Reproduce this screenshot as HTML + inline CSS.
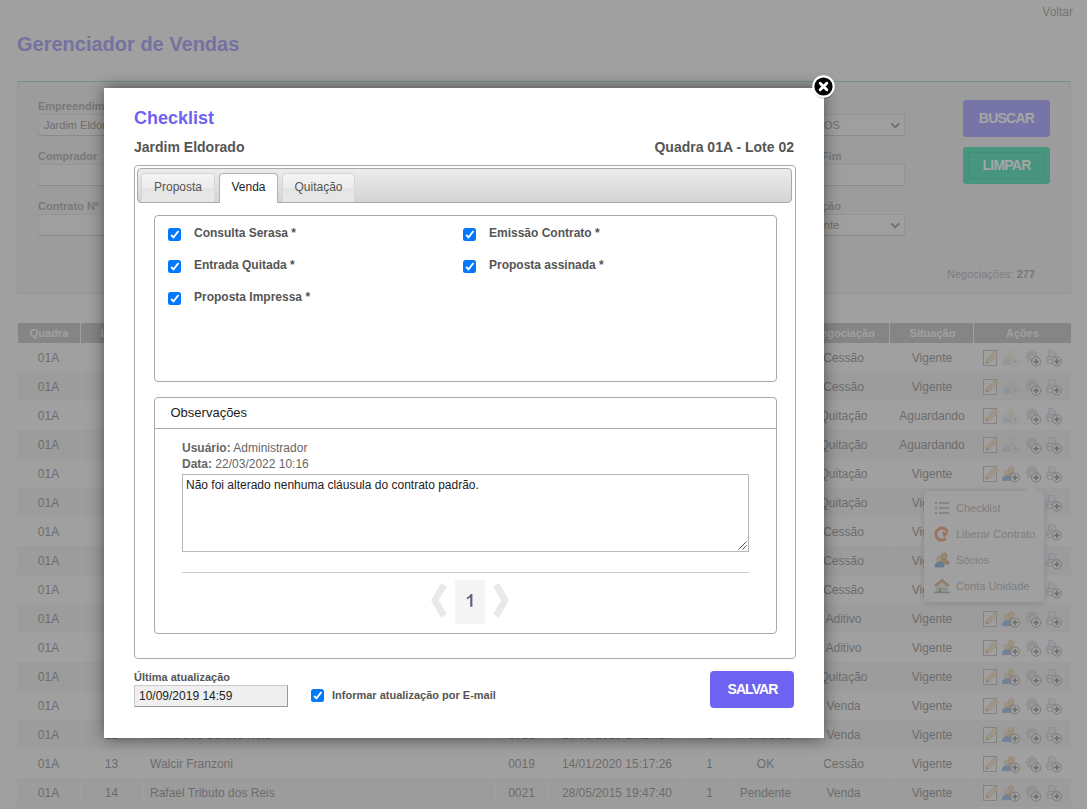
<!DOCTYPE html>
<html lang="pt-br">
<head>
<meta charset="utf-8">
<title>Gerenciador de Vendas</title>
<style>
*{box-sizing:border-box;margin:0;padding:0}
html,body{width:1087px;height:809px;overflow:hidden;background:#fff}
body{font-family:"Liberation Sans",sans-serif;font-size:12px;color:#555;position:relative}
/* ---------- background page ---------- */
#page{position:absolute;left:0;top:0;width:1087px;height:809px;overflow:hidden;background:#fff}
#voltar{position:absolute;right:14px;top:5px;font-size:12px;color:#6a6a6a}
#ptitle{position:absolute;left:17px;top:32px;font-size:20px;font-weight:bold;color:transparent;line-height:24px;white-space:nowrap}
#filter{position:absolute;left:17px;top:81px;width:1054px;height:213px;background:#f1f1f1;border:1px solid #dcdcdc;border-top:1px solid #4fd3b6}
.flabel{position:absolute;font-size:11px;font-weight:bold;color:#7c7c7c;line-height:14px;white-space:nowrap}
.finput{position:absolute;height:22px;background:#fbfbfb;border:1px solid #dadada;border-bottom-color:#b4b4b4;border-right-color:#d0d0d0;font-size:11px;color:#555;line-height:20px;padding-left:5px;white-space:nowrap;overflow:hidden}
.chev{position:absolute;right:4px;top:7px;width:10.5px;height:7px}
.btn{position:absolute;color:#fff;font-weight:bold;font-size:14px;text-align:center;border-radius:4px;letter-spacing:-.75px}
.neg{position:absolute;left:929px;top:185px;font-size:11px;color:#8a8a8a;line-height:14px;white-space:nowrap}
.neg b{color:#777}
#tbl{position:absolute;left:17px;top:323px;width:1054px;height:520px}
.th{position:absolute;top:0;height:20px;background:#a3a3a3;color:#fff;font-weight:bold;font-size:11px;line-height:20px;text-align:center;border-left:1px solid #fff}
.th:first-child{border-left:0;left:1px !important;width:62px !important}
.tr{position:absolute;left:0;width:1054px;height:29px;line-height:31px;font-size:12px;color:#505050}
.tr.alt{background:#f2f2f2}
.vs{position:absolute;top:0;width:1px;height:29px;background:#fff}
.tr span{position:absolute;top:0;text-align:center;white-space:nowrap}
.ic{position:absolute;top:7px;opacity:.82}
#dd{position:absolute;left:924px;top:491px;width:120px;height:111px;background:#fff;border-radius:4px;box-shadow:0 1px 6px rgba(0,0,0,.35)}
.ddi{position:absolute;left:0;width:120px;height:26px;line-height:26px;font-size:11px;color:#8c8c8c;padding-left:32px;white-space:nowrap}
.ddic{position:absolute;left:10px;top:5px;width:16px;height:16px}
#ddcaret{position:absolute;left:101px;top:-6px;width:0;height:0;border-left:6px solid transparent;border-right:6px solid transparent;border-bottom:6px solid #fff}
#ptitle2{position:absolute;left:17px;top:32px;font-size:20px;font-weight:bold;color:#76729f;line-height:24px;white-space:nowrap}
.btn2{position:absolute;width:87px;height:37px;line-height:37px;color:#a6a6a6;font-weight:bold;font-size:14px;text-align:center;border-radius:4px;letter-spacing:-.75px}
/* ---------- overlay ---------- */
#overlay{position:absolute;left:0;top:0;width:1087px;height:809px;background:#777;opacity:.7}
/* ---------- modal ---------- */
#modal{position:absolute;left:104px;top:88px;width:720px;height:650px;background:#fff;box-shadow:0 0 16px 0 rgba(0,0,0,.44),0 -5px 10px -6px rgba(0,0,0,.2),0 5px 10px -6px rgba(0,0,0,.2)}
#close{position:absolute;left:812px;top:74.5px;width:23px;height:23px;overflow:visible}
#modal .m{position:absolute;white-space:nowrap}
#mtitle{left:30px;top:19px;font-size:18px;font-weight:bold;color:#6d63f0;line-height:22px}
#memp{left:30px;top:51px;font-size:14px;font-weight:bold;color:#555;line-height:16px}
#mlote{right:30px;top:51px;font-size:14px;font-weight:bold;color:#555;line-height:16px}
#tabs{position:absolute;left:30px;top:77px;width:662px;height:494px;border:1px solid #aaa;border-radius:4px;background:#fff}
#tabhead{position:absolute;left:2px;top:2px;width:655px;height:35px;border:1px solid #aaa;border-radius:4px;background:linear-gradient(#ececec,#d4d4d4)}
.tab{position:absolute;top:4px;height:29px;border:1px solid #d6d6d6;border-bottom:0;border-radius:4px 4px 0 0;background:linear-gradient(#f4f4f4 0%,#ededed 50%,#e4e4e4 51%,#e8e8e8 100%);color:#555;font-size:12px;line-height:27px;text-align:center}
.tab.act{background:#fff;border-color:#b2b2b2;color:#212121;height:30px}
.fs{position:absolute;border:1px solid #aaa;border-radius:4px;background:#fff}
.cb{position:absolute;width:13.4px;height:13px;border-radius:2.5px;background:#0478fb}
.cb svg{position:absolute;left:0;top:0;width:13px;height:13px}
.cl{position:absolute;font-size:12px;font-weight:bold;color:#555;line-height:14px;white-space:nowrap}
#obs-h{position:absolute;left:0;top:0;width:100%;height:31px;border-bottom:1px solid #aaa;font-size:13px;color:#222;line-height:29px;padding-left:15.5px}
.ol{position:absolute;left:27px;font-size:12px;color:#666;line-height:14px;white-space:nowrap}
#ta{position:absolute;left:27px;top:76px;width:567px;height:78px;border:1px solid #b8b8b8;font-size:12px;color:#222;line-height:14px;padding:3px 3px;white-space:nowrap}
#hr{position:absolute;left:27px;top:174px;width:567px;height:1px;background:#ccc}
#pg1{position:absolute;left:300px;top:182px;width:30px;height:44px;background:#f5f5f5;color:transparent;font-size:18px;line-height:44px;text-align:center}
.pgc{position:absolute;top:185px;width:19px;height:36px}
#ult-l{left:30px;top:582px;font-size:11px;font-weight:bold;color:#555;line-height:14px}
#ult-i{left:30px;top:597px;width:154px;height:22px;background:#efefef;border:1px solid #c8c8c8;border-bottom-color:#999;border-right-color:#999;font-size:12px;color:#222;line-height:20px;padding-left:4px}
#inf-l{left:228px;top:600px;font-size:11px;font-weight:bold;color:#555;line-height:14px}
#salvar{left:606px;top:583px;width:84px;height:37px;border-radius:4px;background:#6d63f0;color:#fff;font-size:14px;font-weight:bold;line-height:37px;text-align:center;letter-spacing:-.9px;padding-left:1px}
</style>
</head>
<body>
<div id="page">
  <div id="voltar">Voltar</div>
  <div id="ptitle">Gerenciador de Vendas</div>
  <div id="filter">
<div class="flabel" style="left:20px;top:17px">Empreendimento</div>
<div class="finput sel" style="left:20px;top:32px;width:250px">Jardim Eldorado</div>
<div class="flabel" style="left:20px;top:67px">Comprador</div>
<div class="finput" style="left:20px;top:82px;width:250px"></div>
<div class="flabel" style="left:20px;top:117px">Contrato N&ordm;</div>
<div class="finput" style="left:20px;top:132px;width:250px"></div>
<div class="flabel" style="left:777px;top:17px">Lote</div>
<div class="finput sel" style="left:773px;top:32px;width:114px;padding-left:9px">TODOS<svg class="chev" viewBox="0 0 12 8"><path d="M1.5 1.5 L6 6 L10.5 1.5" fill="none" stroke="#555" stroke-width="2"/></svg></div>
<div class="flabel" style="left:777px;top:67px">Data Fim</div>
<div class="finput" style="left:773px;top:82px;width:114px"></div>
<div class="flabel" style="left:777px;top:117px">Situa&ccedil;&atilde;o</div>
<div class="finput sel" style="left:773px;top:132px;width:114px;padding-left:10px">Vigente<svg class="chev" viewBox="0 0 12 8"><path d="M1.5 1.5 L6 6 L10.5 1.5" fill="none" stroke="#555" stroke-width="2"/></svg></div>
<div class="btn" style="left:945px;top:18px;width:87px;height:37px;line-height:37px;background:#6c5ce7">BUSCAR</div>
<div class="btn" style="left:945px;top:65px;width:87px;height:37px;line-height:37px;background:#00b894;outline:1px dotted rgba(0,0,0,.28);outline-offset:-5px">LIMPAR</div>
<div class="neg">Negocia&ccedil;&otilde;es: <b>277</b></div>
</div>
  <div id="tbl">
<div class="th" style="left:0px;width:63px">Quadra</div>
<div class="th" style="left:63px;width:63px">Lote</div>
<div class="th" style="left:126px;width:352px">Comprador</div>
<div class="th" style="left:478px;width:53px">Contrato</div>
<div class="th" style="left:531px;width:138px">Data</div>
<div class="th" style="left:669px;width:47px">Nº</div>
<div class="th" style="left:716px;width:65px">Status</div>
<div class="th" style="left:781px;width:91px">Negociação</div>
<div class="th" style="left:872px;width:86px">Situação</div>
<div class="th" style="left:956px;width:98px">Ações</div>
<div class="tr" style="top:20px"><span style="left:0px;width:63px">01A</span><span style="left:63px;width:63px">01</span><span style="left:133px;width:345px;text-align:left">Ana Paula Martins</span><span style="left:478px;width:53px">0003</span><span style="left:531px;width:138px">12/03/2015 10:12:05</span><span style="left:669px;width:47px">1</span><span style="left:716px;width:65px">OK</span><span style="left:781px;width:91px">Cessão</span><span style="left:872px;width:86px">Vigente</span><svg class="ic" style="left:966px" width="16" height="17" viewBox="0 0 16 17"><rect x="0.5" y="0.5" width="13" height="15" fill="#fdfdfd" stroke="#8c8c8c"/><path d="M3.45 9.45 L11.95 0.95 L15.05 4.05 L6.55 12.55 L3.1 13 Z" fill="#f3d29b" stroke="#d8ab68" stroke-width=".7"/><path d="M3.1 13 L3.5 11 L5.1 12.6 Z" fill="#3a3a3a"/></svg><svg class="ic" style="left:985px;opacity:.25" width="18" height="17" viewBox="0 0 18 17"><circle cx="9.2" cy="3.4" r="3" fill="#edc48a" stroke="#c99a58" stroke-width=".6"/><path d="M3.5 12.5 Q3.5 6.8 9.2 6.8 Q14.5 6.8 14.5 12.5 Z" fill="#dfa85a" stroke="#b98644" stroke-width=".6"/><circle cx="4.7" cy="6.6" r="2.6" fill="#f4d3a0" stroke="#b89868" stroke-width=".5"/><path d="M0.3 14.6 Q0.3 9.8 4.7 9.8 Q9.2 9.8 9.2 14.6 Z" fill="#3d8ae6" stroke="#2d6cc0" stroke-width=".6"/><circle cx="13" cy="11.6" r="4.5" fill="#fff" stroke="#666" stroke-width="1"/><path d="M13 9v5.2M10.4 11.6h5.2" stroke="#333" stroke-width="1.5"/></svg><svg class="ic" style="left:1008px" width="18" height="17" viewBox="0 0 18 17"><g fill="#c9c9c9" stroke="#b0b0b0" stroke-width=".6"><path d="M6.4 0.5 l1.2 0 .5 1.6 1.3 .5 1.5-.8 .9 .9 -.8 1.5 .5 1.3 1.6 .5 0 1.2 -1.6 .5 -.5 1.3 .8 1.5 -.9 .9 -1.5-.8 -1.3 .5 -.5 1.6 -1.2 0 -.5-1.6 -1.3-.5 -1.5 .8 -.9-.9 .8-1.5 -.5-1.3 -1.6-.5 0-1.2 1.6-.5 .5-1.3 -.8-1.5 .9-.9 1.5 .8 1.3-.5z"/></g><circle cx="7" cy="7.1" r="2.1" fill="#eee" stroke="#b0b0b0" stroke-width=".6"/><circle cx="11.2" cy="11.6" r="4.6" fill="#fff" stroke="#666" stroke-width="1"/><path d="M11.2 8.9v5.4M8.5 11.6h5.4" stroke="#333" stroke-width="1.6"/></svg><svg class="ic" style="left:1029px" width="17" height="17" viewBox="0 0 17 17"><path d="M2.5 0.5h5.2l2 2v4.5h-7.2z" fill="#dfeaf8" stroke="#9db2cf" stroke-width=".8"/><rect x="0.4" y="6.4" width="10" height="5.8" rx="1" fill="#d9dde2" stroke="#9aa0a8" stroke-width=".8"/><rect x="2" y="9.6" width="5.6" height="4" fill="#fff" stroke="#9aa0a8" stroke-width=".8"/><circle cx="10.8" cy="11.4" r="4.6" fill="#fff" stroke="#666" stroke-width="1"/><path d="M10.8 8.7v5.4M8.1 11.4h5.4" stroke="#333" stroke-width="1.6"/></svg></div>
<div class="tr alt" style="top:49px"><span style="left:0px;width:63px">01A</span><span style="left:63px;width:63px">02</span><span style="left:133px;width:345px;text-align:left">Bruno Carvalho Lima</span><span style="left:478px;width:53px">0004</span><span style="left:531px;width:138px">12/03/2015 11:40:22</span><span style="left:669px;width:47px">1</span><span style="left:716px;width:65px">OK</span><span style="left:781px;width:91px">Cessão</span><span style="left:872px;width:86px">Vigente</span><svg class="ic" style="left:966px" width="16" height="17" viewBox="0 0 16 17"><rect x="0.5" y="0.5" width="13" height="15" fill="#fdfdfd" stroke="#8c8c8c"/><path d="M3.45 9.45 L11.95 0.95 L15.05 4.05 L6.55 12.55 L3.1 13 Z" fill="#f3d29b" stroke="#d8ab68" stroke-width=".7"/><path d="M3.1 13 L3.5 11 L5.1 12.6 Z" fill="#3a3a3a"/></svg><svg class="ic" style="left:985px;opacity:.25" width="18" height="17" viewBox="0 0 18 17"><circle cx="9.2" cy="3.4" r="3" fill="#edc48a" stroke="#c99a58" stroke-width=".6"/><path d="M3.5 12.5 Q3.5 6.8 9.2 6.8 Q14.5 6.8 14.5 12.5 Z" fill="#dfa85a" stroke="#b98644" stroke-width=".6"/><circle cx="4.7" cy="6.6" r="2.6" fill="#f4d3a0" stroke="#b89868" stroke-width=".5"/><path d="M0.3 14.6 Q0.3 9.8 4.7 9.8 Q9.2 9.8 9.2 14.6 Z" fill="#3d8ae6" stroke="#2d6cc0" stroke-width=".6"/><circle cx="13" cy="11.6" r="4.5" fill="#fff" stroke="#666" stroke-width="1"/><path d="M13 9v5.2M10.4 11.6h5.2" stroke="#333" stroke-width="1.5"/></svg><svg class="ic" style="left:1008px" width="18" height="17" viewBox="0 0 18 17"><g fill="#c9c9c9" stroke="#b0b0b0" stroke-width=".6"><path d="M6.4 0.5 l1.2 0 .5 1.6 1.3 .5 1.5-.8 .9 .9 -.8 1.5 .5 1.3 1.6 .5 0 1.2 -1.6 .5 -.5 1.3 .8 1.5 -.9 .9 -1.5-.8 -1.3 .5 -.5 1.6 -1.2 0 -.5-1.6 -1.3-.5 -1.5 .8 -.9-.9 .8-1.5 -.5-1.3 -1.6-.5 0-1.2 1.6-.5 .5-1.3 -.8-1.5 .9-.9 1.5 .8 1.3-.5z"/></g><circle cx="7" cy="7.1" r="2.1" fill="#eee" stroke="#b0b0b0" stroke-width=".6"/><circle cx="11.2" cy="11.6" r="4.6" fill="#fff" stroke="#666" stroke-width="1"/><path d="M11.2 8.9v5.4M8.5 11.6h5.4" stroke="#333" stroke-width="1.6"/></svg><svg class="ic" style="left:1029px" width="17" height="17" viewBox="0 0 17 17"><path d="M2.5 0.5h5.2l2 2v4.5h-7.2z" fill="#dfeaf8" stroke="#9db2cf" stroke-width=".8"/><rect x="0.4" y="6.4" width="10" height="5.8" rx="1" fill="#d9dde2" stroke="#9aa0a8" stroke-width=".8"/><rect x="2" y="9.6" width="5.6" height="4" fill="#fff" stroke="#9aa0a8" stroke-width=".8"/><circle cx="10.8" cy="11.4" r="4.6" fill="#fff" stroke="#666" stroke-width="1"/><path d="M10.8 8.7v5.4M8.1 11.4h5.4" stroke="#333" stroke-width="1.6"/></svg><i class="vs" style="left:63px"></i><i class="vs" style="left:126px"></i><i class="vs" style="left:478px"></i><i class="vs" style="left:531px"></i><i class="vs" style="left:669px"></i><i class="vs" style="left:716px"></i><i class="vs" style="left:781px"></i><i class="vs" style="left:872px"></i><i class="vs" style="left:956px"></i></div>
<div class="tr" style="top:78px"><span style="left:0px;width:63px">01A</span><span style="left:63px;width:63px">02</span><span style="left:133px;width:345px;text-align:left">Carla Souza Dias</span><span style="left:478px;width:53px">0005</span><span style="left:531px;width:138px">20/04/2015 09:15:10</span><span style="left:669px;width:47px">1</span><span style="left:716px;width:65px">Pendente</span><span style="left:781px;width:91px">Quitação</span><span style="left:872px;width:86px">Aguardando</span><svg class="ic" style="left:966px" width="16" height="17" viewBox="0 0 16 17"><rect x="0.5" y="0.5" width="13" height="15" fill="#fdfdfd" stroke="#8c8c8c"/><path d="M3.45 9.45 L11.95 0.95 L15.05 4.05 L6.55 12.55 L3.1 13 Z" fill="#f3d29b" stroke="#d8ab68" stroke-width=".7"/><path d="M3.1 13 L3.5 11 L5.1 12.6 Z" fill="#3a3a3a"/></svg><svg class="ic" style="left:985px;opacity:.25" width="18" height="17" viewBox="0 0 18 17"><circle cx="9.2" cy="3.4" r="3" fill="#edc48a" stroke="#c99a58" stroke-width=".6"/><path d="M3.5 12.5 Q3.5 6.8 9.2 6.8 Q14.5 6.8 14.5 12.5 Z" fill="#dfa85a" stroke="#b98644" stroke-width=".6"/><circle cx="4.7" cy="6.6" r="2.6" fill="#f4d3a0" stroke="#b89868" stroke-width=".5"/><path d="M0.3 14.6 Q0.3 9.8 4.7 9.8 Q9.2 9.8 9.2 14.6 Z" fill="#3d8ae6" stroke="#2d6cc0" stroke-width=".6"/><circle cx="13" cy="11.6" r="4.5" fill="#fff" stroke="#666" stroke-width="1"/><path d="M13 9v5.2M10.4 11.6h5.2" stroke="#333" stroke-width="1.5"/></svg><svg class="ic" style="left:1008px" width="18" height="17" viewBox="0 0 18 17"><g fill="#c9c9c9" stroke="#b0b0b0" stroke-width=".6"><path d="M6.4 0.5 l1.2 0 .5 1.6 1.3 .5 1.5-.8 .9 .9 -.8 1.5 .5 1.3 1.6 .5 0 1.2 -1.6 .5 -.5 1.3 .8 1.5 -.9 .9 -1.5-.8 -1.3 .5 -.5 1.6 -1.2 0 -.5-1.6 -1.3-.5 -1.5 .8 -.9-.9 .8-1.5 -.5-1.3 -1.6-.5 0-1.2 1.6-.5 .5-1.3 -.8-1.5 .9-.9 1.5 .8 1.3-.5z"/></g><circle cx="7" cy="7.1" r="2.1" fill="#eee" stroke="#b0b0b0" stroke-width=".6"/><circle cx="11.2" cy="11.6" r="4.6" fill="#fff" stroke="#666" stroke-width="1"/><path d="M11.2 8.9v5.4M8.5 11.6h5.4" stroke="#333" stroke-width="1.6"/></svg><svg class="ic" style="left:1029px" width="17" height="17" viewBox="0 0 17 17"><path d="M2.5 0.5h5.2l2 2v4.5h-7.2z" fill="#dfeaf8" stroke="#9db2cf" stroke-width=".8"/><rect x="0.4" y="6.4" width="10" height="5.8" rx="1" fill="#d9dde2" stroke="#9aa0a8" stroke-width=".8"/><rect x="2" y="9.6" width="5.6" height="4" fill="#fff" stroke="#9aa0a8" stroke-width=".8"/><circle cx="10.8" cy="11.4" r="4.6" fill="#fff" stroke="#666" stroke-width="1"/><path d="M10.8 8.7v5.4M8.1 11.4h5.4" stroke="#333" stroke-width="1.6"/></svg></div>
<div class="tr alt" style="top:107px"><span style="left:0px;width:63px">01A</span><span style="left:63px;width:63px">03</span><span style="left:133px;width:345px;text-align:left">Daniel Rocha Pires</span><span style="left:478px;width:53px">0006</span><span style="left:531px;width:138px">22/04/2015 14:02:48</span><span style="left:669px;width:47px">1</span><span style="left:716px;width:65px">Pendente</span><span style="left:781px;width:91px">Quitação</span><span style="left:872px;width:86px">Aguardando</span><svg class="ic" style="left:966px" width="16" height="17" viewBox="0 0 16 17"><rect x="0.5" y="0.5" width="13" height="15" fill="#fdfdfd" stroke="#8c8c8c"/><path d="M3.45 9.45 L11.95 0.95 L15.05 4.05 L6.55 12.55 L3.1 13 Z" fill="#f3d29b" stroke="#d8ab68" stroke-width=".7"/><path d="M3.1 13 L3.5 11 L5.1 12.6 Z" fill="#3a3a3a"/></svg><svg class="ic" style="left:985px;opacity:.25" width="18" height="17" viewBox="0 0 18 17"><circle cx="9.2" cy="3.4" r="3" fill="#edc48a" stroke="#c99a58" stroke-width=".6"/><path d="M3.5 12.5 Q3.5 6.8 9.2 6.8 Q14.5 6.8 14.5 12.5 Z" fill="#dfa85a" stroke="#b98644" stroke-width=".6"/><circle cx="4.7" cy="6.6" r="2.6" fill="#f4d3a0" stroke="#b89868" stroke-width=".5"/><path d="M0.3 14.6 Q0.3 9.8 4.7 9.8 Q9.2 9.8 9.2 14.6 Z" fill="#3d8ae6" stroke="#2d6cc0" stroke-width=".6"/><circle cx="13" cy="11.6" r="4.5" fill="#fff" stroke="#666" stroke-width="1"/><path d="M13 9v5.2M10.4 11.6h5.2" stroke="#333" stroke-width="1.5"/></svg><svg class="ic" style="left:1008px" width="18" height="17" viewBox="0 0 18 17"><g fill="#c9c9c9" stroke="#b0b0b0" stroke-width=".6"><path d="M6.4 0.5 l1.2 0 .5 1.6 1.3 .5 1.5-.8 .9 .9 -.8 1.5 .5 1.3 1.6 .5 0 1.2 -1.6 .5 -.5 1.3 .8 1.5 -.9 .9 -1.5-.8 -1.3 .5 -.5 1.6 -1.2 0 -.5-1.6 -1.3-.5 -1.5 .8 -.9-.9 .8-1.5 -.5-1.3 -1.6-.5 0-1.2 1.6-.5 .5-1.3 -.8-1.5 .9-.9 1.5 .8 1.3-.5z"/></g><circle cx="7" cy="7.1" r="2.1" fill="#eee" stroke="#b0b0b0" stroke-width=".6"/><circle cx="11.2" cy="11.6" r="4.6" fill="#fff" stroke="#666" stroke-width="1"/><path d="M11.2 8.9v5.4M8.5 11.6h5.4" stroke="#333" stroke-width="1.6"/></svg><svg class="ic" style="left:1029px" width="17" height="17" viewBox="0 0 17 17"><path d="M2.5 0.5h5.2l2 2v4.5h-7.2z" fill="#dfeaf8" stroke="#9db2cf" stroke-width=".8"/><rect x="0.4" y="6.4" width="10" height="5.8" rx="1" fill="#d9dde2" stroke="#9aa0a8" stroke-width=".8"/><rect x="2" y="9.6" width="5.6" height="4" fill="#fff" stroke="#9aa0a8" stroke-width=".8"/><circle cx="10.8" cy="11.4" r="4.6" fill="#fff" stroke="#666" stroke-width="1"/><path d="M10.8 8.7v5.4M8.1 11.4h5.4" stroke="#333" stroke-width="1.6"/></svg><i class="vs" style="left:63px"></i><i class="vs" style="left:126px"></i><i class="vs" style="left:478px"></i><i class="vs" style="left:531px"></i><i class="vs" style="left:669px"></i><i class="vs" style="left:716px"></i><i class="vs" style="left:781px"></i><i class="vs" style="left:872px"></i><i class="vs" style="left:956px"></i></div>
<div class="tr" style="top:136px"><span style="left:0px;width:63px">01A</span><span style="left:63px;width:63px">04</span><span style="left:133px;width:345px;text-align:left">Eduardo Alves Neto</span><span style="left:478px;width:53px">0007</span><span style="left:531px;width:138px">05/05/2015 16:30:00</span><span style="left:669px;width:47px">1</span><span style="left:716px;width:65px">OK</span><span style="left:781px;width:91px">Quitação</span><span style="left:872px;width:86px">Vigente</span><svg class="ic" style="left:966px" width="16" height="17" viewBox="0 0 16 17"><rect x="0.5" y="0.5" width="13" height="15" fill="#fdfdfd" stroke="#8c8c8c"/><path d="M3.45 9.45 L11.95 0.95 L15.05 4.05 L6.55 12.55 L3.1 13 Z" fill="#f3d29b" stroke="#d8ab68" stroke-width=".7"/><path d="M3.1 13 L3.5 11 L5.1 12.6 Z" fill="#3a3a3a"/></svg><svg class="ic" style="left:985px;opacity:.85" width="18" height="17" viewBox="0 0 18 17"><circle cx="9.2" cy="3.4" r="3" fill="#edc48a" stroke="#c99a58" stroke-width=".6"/><path d="M3.5 12.5 Q3.5 6.8 9.2 6.8 Q14.5 6.8 14.5 12.5 Z" fill="#dfa85a" stroke="#b98644" stroke-width=".6"/><circle cx="4.7" cy="6.6" r="2.6" fill="#f4d3a0" stroke="#b89868" stroke-width=".5"/><path d="M0.3 14.6 Q0.3 9.8 4.7 9.8 Q9.2 9.8 9.2 14.6 Z" fill="#3d8ae6" stroke="#2d6cc0" stroke-width=".6"/><circle cx="13" cy="11.6" r="4.5" fill="#fff" stroke="#666" stroke-width="1"/><path d="M13 9v5.2M10.4 11.6h5.2" stroke="#333" stroke-width="1.5"/></svg><svg class="ic" style="left:1008px" width="18" height="17" viewBox="0 0 18 17"><g fill="#c9c9c9" stroke="#b0b0b0" stroke-width=".6"><path d="M6.4 0.5 l1.2 0 .5 1.6 1.3 .5 1.5-.8 .9 .9 -.8 1.5 .5 1.3 1.6 .5 0 1.2 -1.6 .5 -.5 1.3 .8 1.5 -.9 .9 -1.5-.8 -1.3 .5 -.5 1.6 -1.2 0 -.5-1.6 -1.3-.5 -1.5 .8 -.9-.9 .8-1.5 -.5-1.3 -1.6-.5 0-1.2 1.6-.5 .5-1.3 -.8-1.5 .9-.9 1.5 .8 1.3-.5z"/></g><circle cx="7" cy="7.1" r="2.1" fill="#eee" stroke="#b0b0b0" stroke-width=".6"/><circle cx="11.2" cy="11.6" r="4.6" fill="#fff" stroke="#666" stroke-width="1"/><path d="M11.2 8.9v5.4M8.5 11.6h5.4" stroke="#333" stroke-width="1.6"/></svg><svg class="ic" style="left:1029px" width="17" height="17" viewBox="0 0 17 17"><path d="M2.5 0.5h5.2l2 2v4.5h-7.2z" fill="#dfeaf8" stroke="#9db2cf" stroke-width=".8"/><rect x="0.4" y="6.4" width="10" height="5.8" rx="1" fill="#d9dde2" stroke="#9aa0a8" stroke-width=".8"/><rect x="2" y="9.6" width="5.6" height="4" fill="#fff" stroke="#9aa0a8" stroke-width=".8"/><circle cx="10.8" cy="11.4" r="4.6" fill="#fff" stroke="#666" stroke-width="1"/><path d="M10.8 8.7v5.4M8.1 11.4h5.4" stroke="#333" stroke-width="1.6"/></svg></div>
<div class="tr alt" style="top:165px"><span style="left:0px;width:63px">01A</span><span style="left:63px;width:63px">05</span><span style="left:133px;width:345px;text-align:left">Fernanda Gomes</span><span style="left:478px;width:53px">0008</span><span style="left:531px;width:138px">06/05/2015 08:45:31</span><span style="left:669px;width:47px">1</span><span style="left:716px;width:65px">OK</span><span style="left:781px;width:91px">Quitação</span><span style="left:872px;width:86px">Vigente</span><svg class="ic" style="left:966px" width="16" height="17" viewBox="0 0 16 17"><rect x="0.5" y="0.5" width="13" height="15" fill="#fdfdfd" stroke="#8c8c8c"/><path d="M3.45 9.45 L11.95 0.95 L15.05 4.05 L6.55 12.55 L3.1 13 Z" fill="#f3d29b" stroke="#d8ab68" stroke-width=".7"/><path d="M3.1 13 L3.5 11 L5.1 12.6 Z" fill="#3a3a3a"/></svg><svg class="ic" style="left:985px;opacity:.85" width="18" height="17" viewBox="0 0 18 17"><circle cx="9.2" cy="3.4" r="3" fill="#edc48a" stroke="#c99a58" stroke-width=".6"/><path d="M3.5 12.5 Q3.5 6.8 9.2 6.8 Q14.5 6.8 14.5 12.5 Z" fill="#dfa85a" stroke="#b98644" stroke-width=".6"/><circle cx="4.7" cy="6.6" r="2.6" fill="#f4d3a0" stroke="#b89868" stroke-width=".5"/><path d="M0.3 14.6 Q0.3 9.8 4.7 9.8 Q9.2 9.8 9.2 14.6 Z" fill="#3d8ae6" stroke="#2d6cc0" stroke-width=".6"/><circle cx="13" cy="11.6" r="4.5" fill="#fff" stroke="#666" stroke-width="1"/><path d="M13 9v5.2M10.4 11.6h5.2" stroke="#333" stroke-width="1.5"/></svg><svg class="ic" style="left:1008px" width="18" height="17" viewBox="0 0 18 17"><g fill="#c9c9c9" stroke="#b0b0b0" stroke-width=".6"><path d="M6.4 0.5 l1.2 0 .5 1.6 1.3 .5 1.5-.8 .9 .9 -.8 1.5 .5 1.3 1.6 .5 0 1.2 -1.6 .5 -.5 1.3 .8 1.5 -.9 .9 -1.5-.8 -1.3 .5 -.5 1.6 -1.2 0 -.5-1.6 -1.3-.5 -1.5 .8 -.9-.9 .8-1.5 -.5-1.3 -1.6-.5 0-1.2 1.6-.5 .5-1.3 -.8-1.5 .9-.9 1.5 .8 1.3-.5z"/></g><circle cx="7" cy="7.1" r="2.1" fill="#eee" stroke="#b0b0b0" stroke-width=".6"/><circle cx="11.2" cy="11.6" r="4.6" fill="#fff" stroke="#666" stroke-width="1"/><path d="M11.2 8.9v5.4M8.5 11.6h5.4" stroke="#333" stroke-width="1.6"/></svg><svg class="ic" style="left:1029px" width="17" height="17" viewBox="0 0 17 17"><path d="M2.5 0.5h5.2l2 2v4.5h-7.2z" fill="#dfeaf8" stroke="#9db2cf" stroke-width=".8"/><rect x="0.4" y="6.4" width="10" height="5.8" rx="1" fill="#d9dde2" stroke="#9aa0a8" stroke-width=".8"/><rect x="2" y="9.6" width="5.6" height="4" fill="#fff" stroke="#9aa0a8" stroke-width=".8"/><circle cx="10.8" cy="11.4" r="4.6" fill="#fff" stroke="#666" stroke-width="1"/><path d="M10.8 8.7v5.4M8.1 11.4h5.4" stroke="#333" stroke-width="1.6"/></svg><i class="vs" style="left:63px"></i><i class="vs" style="left:126px"></i><i class="vs" style="left:478px"></i><i class="vs" style="left:531px"></i><i class="vs" style="left:669px"></i><i class="vs" style="left:716px"></i><i class="vs" style="left:781px"></i><i class="vs" style="left:872px"></i><i class="vs" style="left:956px"></i></div>
<div class="tr" style="top:194px"><span style="left:0px;width:63px">01A</span><span style="left:63px;width:63px">06</span><span style="left:133px;width:345px;text-align:left">Gustavo Henrique Silva</span><span style="left:478px;width:53px">0009</span><span style="left:531px;width:138px">11/05/2015 13:20:19</span><span style="left:669px;width:47px">1</span><span style="left:716px;width:65px">OK</span><span style="left:781px;width:91px">Cessão</span><span style="left:872px;width:86px">Vigente</span><svg class="ic" style="left:966px" width="16" height="17" viewBox="0 0 16 17"><rect x="0.5" y="0.5" width="13" height="15" fill="#fdfdfd" stroke="#8c8c8c"/><path d="M3.45 9.45 L11.95 0.95 L15.05 4.05 L6.55 12.55 L3.1 13 Z" fill="#f3d29b" stroke="#d8ab68" stroke-width=".7"/><path d="M3.1 13 L3.5 11 L5.1 12.6 Z" fill="#3a3a3a"/></svg><svg class="ic" style="left:985px;opacity:.85" width="18" height="17" viewBox="0 0 18 17"><circle cx="9.2" cy="3.4" r="3" fill="#edc48a" stroke="#c99a58" stroke-width=".6"/><path d="M3.5 12.5 Q3.5 6.8 9.2 6.8 Q14.5 6.8 14.5 12.5 Z" fill="#dfa85a" stroke="#b98644" stroke-width=".6"/><circle cx="4.7" cy="6.6" r="2.6" fill="#f4d3a0" stroke="#b89868" stroke-width=".5"/><path d="M0.3 14.6 Q0.3 9.8 4.7 9.8 Q9.2 9.8 9.2 14.6 Z" fill="#3d8ae6" stroke="#2d6cc0" stroke-width=".6"/><circle cx="13" cy="11.6" r="4.5" fill="#fff" stroke="#666" stroke-width="1"/><path d="M13 9v5.2M10.4 11.6h5.2" stroke="#333" stroke-width="1.5"/></svg><svg class="ic" style="left:1008px" width="18" height="17" viewBox="0 0 18 17"><g fill="#c9c9c9" stroke="#b0b0b0" stroke-width=".6"><path d="M6.4 0.5 l1.2 0 .5 1.6 1.3 .5 1.5-.8 .9 .9 -.8 1.5 .5 1.3 1.6 .5 0 1.2 -1.6 .5 -.5 1.3 .8 1.5 -.9 .9 -1.5-.8 -1.3 .5 -.5 1.6 -1.2 0 -.5-1.6 -1.3-.5 -1.5 .8 -.9-.9 .8-1.5 -.5-1.3 -1.6-.5 0-1.2 1.6-.5 .5-1.3 -.8-1.5 .9-.9 1.5 .8 1.3-.5z"/></g><circle cx="7" cy="7.1" r="2.1" fill="#eee" stroke="#b0b0b0" stroke-width=".6"/><circle cx="11.2" cy="11.6" r="4.6" fill="#fff" stroke="#666" stroke-width="1"/><path d="M11.2 8.9v5.4M8.5 11.6h5.4" stroke="#333" stroke-width="1.6"/></svg><svg class="ic" style="left:1029px" width="17" height="17" viewBox="0 0 17 17"><path d="M2.5 0.5h5.2l2 2v4.5h-7.2z" fill="#dfeaf8" stroke="#9db2cf" stroke-width=".8"/><rect x="0.4" y="6.4" width="10" height="5.8" rx="1" fill="#d9dde2" stroke="#9aa0a8" stroke-width=".8"/><rect x="2" y="9.6" width="5.6" height="4" fill="#fff" stroke="#9aa0a8" stroke-width=".8"/><circle cx="10.8" cy="11.4" r="4.6" fill="#fff" stroke="#666" stroke-width="1"/><path d="M10.8 8.7v5.4M8.1 11.4h5.4" stroke="#333" stroke-width="1.6"/></svg></div>
<div class="tr alt" style="top:223px"><span style="left:0px;width:63px">01A</span><span style="left:63px;width:63px">07</span><span style="left:133px;width:345px;text-align:left">Helena Barbosa</span><span style="left:478px;width:53px">0010</span><span style="left:531px;width:138px">13/05/2015 15:55:42</span><span style="left:669px;width:47px">1</span><span style="left:716px;width:65px">OK</span><span style="left:781px;width:91px">Cessão</span><span style="left:872px;width:86px">Vigente</span><svg class="ic" style="left:966px" width="16" height="17" viewBox="0 0 16 17"><rect x="0.5" y="0.5" width="13" height="15" fill="#fdfdfd" stroke="#8c8c8c"/><path d="M3.45 9.45 L11.95 0.95 L15.05 4.05 L6.55 12.55 L3.1 13 Z" fill="#f3d29b" stroke="#d8ab68" stroke-width=".7"/><path d="M3.1 13 L3.5 11 L5.1 12.6 Z" fill="#3a3a3a"/></svg><svg class="ic" style="left:985px;opacity:.85" width="18" height="17" viewBox="0 0 18 17"><circle cx="9.2" cy="3.4" r="3" fill="#edc48a" stroke="#c99a58" stroke-width=".6"/><path d="M3.5 12.5 Q3.5 6.8 9.2 6.8 Q14.5 6.8 14.5 12.5 Z" fill="#dfa85a" stroke="#b98644" stroke-width=".6"/><circle cx="4.7" cy="6.6" r="2.6" fill="#f4d3a0" stroke="#b89868" stroke-width=".5"/><path d="M0.3 14.6 Q0.3 9.8 4.7 9.8 Q9.2 9.8 9.2 14.6 Z" fill="#3d8ae6" stroke="#2d6cc0" stroke-width=".6"/><circle cx="13" cy="11.6" r="4.5" fill="#fff" stroke="#666" stroke-width="1"/><path d="M13 9v5.2M10.4 11.6h5.2" stroke="#333" stroke-width="1.5"/></svg><svg class="ic" style="left:1008px" width="18" height="17" viewBox="0 0 18 17"><g fill="#c9c9c9" stroke="#b0b0b0" stroke-width=".6"><path d="M6.4 0.5 l1.2 0 .5 1.6 1.3 .5 1.5-.8 .9 .9 -.8 1.5 .5 1.3 1.6 .5 0 1.2 -1.6 .5 -.5 1.3 .8 1.5 -.9 .9 -1.5-.8 -1.3 .5 -.5 1.6 -1.2 0 -.5-1.6 -1.3-.5 -1.5 .8 -.9-.9 .8-1.5 -.5-1.3 -1.6-.5 0-1.2 1.6-.5 .5-1.3 -.8-1.5 .9-.9 1.5 .8 1.3-.5z"/></g><circle cx="7" cy="7.1" r="2.1" fill="#eee" stroke="#b0b0b0" stroke-width=".6"/><circle cx="11.2" cy="11.6" r="4.6" fill="#fff" stroke="#666" stroke-width="1"/><path d="M11.2 8.9v5.4M8.5 11.6h5.4" stroke="#333" stroke-width="1.6"/></svg><svg class="ic" style="left:1029px" width="17" height="17" viewBox="0 0 17 17"><path d="M2.5 0.5h5.2l2 2v4.5h-7.2z" fill="#dfeaf8" stroke="#9db2cf" stroke-width=".8"/><rect x="0.4" y="6.4" width="10" height="5.8" rx="1" fill="#d9dde2" stroke="#9aa0a8" stroke-width=".8"/><rect x="2" y="9.6" width="5.6" height="4" fill="#fff" stroke="#9aa0a8" stroke-width=".8"/><circle cx="10.8" cy="11.4" r="4.6" fill="#fff" stroke="#666" stroke-width="1"/><path d="M10.8 8.7v5.4M8.1 11.4h5.4" stroke="#333" stroke-width="1.6"/></svg><i class="vs" style="left:63px"></i><i class="vs" style="left:126px"></i><i class="vs" style="left:478px"></i><i class="vs" style="left:531px"></i><i class="vs" style="left:669px"></i><i class="vs" style="left:716px"></i><i class="vs" style="left:781px"></i><i class="vs" style="left:872px"></i><i class="vs" style="left:956px"></i></div>
<div class="tr" style="top:252px"><span style="left:0px;width:63px">01A</span><span style="left:63px;width:63px">08</span><span style="left:133px;width:345px;text-align:left">Igor Mendes Costa</span><span style="left:478px;width:53px">0011</span><span style="left:531px;width:138px">18/05/2015 10:05:07</span><span style="left:669px;width:47px">1</span><span style="left:716px;width:65px">OK</span><span style="left:781px;width:91px">Cessão</span><span style="left:872px;width:86px">Vigente</span><svg class="ic" style="left:966px" width="16" height="17" viewBox="0 0 16 17"><rect x="0.5" y="0.5" width="13" height="15" fill="#fdfdfd" stroke="#8c8c8c"/><path d="M3.45 9.45 L11.95 0.95 L15.05 4.05 L6.55 12.55 L3.1 13 Z" fill="#f3d29b" stroke="#d8ab68" stroke-width=".7"/><path d="M3.1 13 L3.5 11 L5.1 12.6 Z" fill="#3a3a3a"/></svg><svg class="ic" style="left:985px;opacity:.85" width="18" height="17" viewBox="0 0 18 17"><circle cx="9.2" cy="3.4" r="3" fill="#edc48a" stroke="#c99a58" stroke-width=".6"/><path d="M3.5 12.5 Q3.5 6.8 9.2 6.8 Q14.5 6.8 14.5 12.5 Z" fill="#dfa85a" stroke="#b98644" stroke-width=".6"/><circle cx="4.7" cy="6.6" r="2.6" fill="#f4d3a0" stroke="#b89868" stroke-width=".5"/><path d="M0.3 14.6 Q0.3 9.8 4.7 9.8 Q9.2 9.8 9.2 14.6 Z" fill="#3d8ae6" stroke="#2d6cc0" stroke-width=".6"/><circle cx="13" cy="11.6" r="4.5" fill="#fff" stroke="#666" stroke-width="1"/><path d="M13 9v5.2M10.4 11.6h5.2" stroke="#333" stroke-width="1.5"/></svg><svg class="ic" style="left:1008px" width="18" height="17" viewBox="0 0 18 17"><g fill="#c9c9c9" stroke="#b0b0b0" stroke-width=".6"><path d="M6.4 0.5 l1.2 0 .5 1.6 1.3 .5 1.5-.8 .9 .9 -.8 1.5 .5 1.3 1.6 .5 0 1.2 -1.6 .5 -.5 1.3 .8 1.5 -.9 .9 -1.5-.8 -1.3 .5 -.5 1.6 -1.2 0 -.5-1.6 -1.3-.5 -1.5 .8 -.9-.9 .8-1.5 -.5-1.3 -1.6-.5 0-1.2 1.6-.5 .5-1.3 -.8-1.5 .9-.9 1.5 .8 1.3-.5z"/></g><circle cx="7" cy="7.1" r="2.1" fill="#eee" stroke="#b0b0b0" stroke-width=".6"/><circle cx="11.2" cy="11.6" r="4.6" fill="#fff" stroke="#666" stroke-width="1"/><path d="M11.2 8.9v5.4M8.5 11.6h5.4" stroke="#333" stroke-width="1.6"/></svg><svg class="ic" style="left:1029px" width="17" height="17" viewBox="0 0 17 17"><path d="M2.5 0.5h5.2l2 2v4.5h-7.2z" fill="#dfeaf8" stroke="#9db2cf" stroke-width=".8"/><rect x="0.4" y="6.4" width="10" height="5.8" rx="1" fill="#d9dde2" stroke="#9aa0a8" stroke-width=".8"/><rect x="2" y="9.6" width="5.6" height="4" fill="#fff" stroke="#9aa0a8" stroke-width=".8"/><circle cx="10.8" cy="11.4" r="4.6" fill="#fff" stroke="#666" stroke-width="1"/><path d="M10.8 8.7v5.4M8.1 11.4h5.4" stroke="#333" stroke-width="1.6"/></svg></div>
<div class="tr alt" style="top:281px"><span style="left:0px;width:63px">01A</span><span style="left:63px;width:63px">09</span><span style="left:133px;width:345px;text-align:left">Juliana Prado</span><span style="left:478px;width:53px">0012</span><span style="left:531px;width:138px">19/05/2015 11:11:11</span><span style="left:669px;width:47px">1</span><span style="left:716px;width:65px">OK</span><span style="left:781px;width:91px">Aditivo</span><span style="left:872px;width:86px">Vigente</span><svg class="ic" style="left:966px" width="16" height="17" viewBox="0 0 16 17"><rect x="0.5" y="0.5" width="13" height="15" fill="#fdfdfd" stroke="#8c8c8c"/><path d="M3.45 9.45 L11.95 0.95 L15.05 4.05 L6.55 12.55 L3.1 13 Z" fill="#f3d29b" stroke="#d8ab68" stroke-width=".7"/><path d="M3.1 13 L3.5 11 L5.1 12.6 Z" fill="#3a3a3a"/></svg><svg class="ic" style="left:985px;opacity:.85" width="18" height="17" viewBox="0 0 18 17"><circle cx="9.2" cy="3.4" r="3" fill="#edc48a" stroke="#c99a58" stroke-width=".6"/><path d="M3.5 12.5 Q3.5 6.8 9.2 6.8 Q14.5 6.8 14.5 12.5 Z" fill="#dfa85a" stroke="#b98644" stroke-width=".6"/><circle cx="4.7" cy="6.6" r="2.6" fill="#f4d3a0" stroke="#b89868" stroke-width=".5"/><path d="M0.3 14.6 Q0.3 9.8 4.7 9.8 Q9.2 9.8 9.2 14.6 Z" fill="#3d8ae6" stroke="#2d6cc0" stroke-width=".6"/><circle cx="13" cy="11.6" r="4.5" fill="#fff" stroke="#666" stroke-width="1"/><path d="M13 9v5.2M10.4 11.6h5.2" stroke="#333" stroke-width="1.5"/></svg><svg class="ic" style="left:1008px" width="18" height="17" viewBox="0 0 18 17"><g fill="#c9c9c9" stroke="#b0b0b0" stroke-width=".6"><path d="M6.4 0.5 l1.2 0 .5 1.6 1.3 .5 1.5-.8 .9 .9 -.8 1.5 .5 1.3 1.6 .5 0 1.2 -1.6 .5 -.5 1.3 .8 1.5 -.9 .9 -1.5-.8 -1.3 .5 -.5 1.6 -1.2 0 -.5-1.6 -1.3-.5 -1.5 .8 -.9-.9 .8-1.5 -.5-1.3 -1.6-.5 0-1.2 1.6-.5 .5-1.3 -.8-1.5 .9-.9 1.5 .8 1.3-.5z"/></g><circle cx="7" cy="7.1" r="2.1" fill="#eee" stroke="#b0b0b0" stroke-width=".6"/><circle cx="11.2" cy="11.6" r="4.6" fill="#fff" stroke="#666" stroke-width="1"/><path d="M11.2 8.9v5.4M8.5 11.6h5.4" stroke="#333" stroke-width="1.6"/></svg><svg class="ic" style="left:1029px" width="17" height="17" viewBox="0 0 17 17"><path d="M2.5 0.5h5.2l2 2v4.5h-7.2z" fill="#dfeaf8" stroke="#9db2cf" stroke-width=".8"/><rect x="0.4" y="6.4" width="10" height="5.8" rx="1" fill="#d9dde2" stroke="#9aa0a8" stroke-width=".8"/><rect x="2" y="9.6" width="5.6" height="4" fill="#fff" stroke="#9aa0a8" stroke-width=".8"/><circle cx="10.8" cy="11.4" r="4.6" fill="#fff" stroke="#666" stroke-width="1"/><path d="M10.8 8.7v5.4M8.1 11.4h5.4" stroke="#333" stroke-width="1.6"/></svg><i class="vs" style="left:63px"></i><i class="vs" style="left:126px"></i><i class="vs" style="left:478px"></i><i class="vs" style="left:531px"></i><i class="vs" style="left:669px"></i><i class="vs" style="left:716px"></i><i class="vs" style="left:781px"></i><i class="vs" style="left:872px"></i><i class="vs" style="left:956px"></i></div>
<div class="tr" style="top:310px"><span style="left:0px;width:63px">01A</span><span style="left:63px;width:63px">10</span><span style="left:133px;width:345px;text-align:left">Leandro Teixeira</span><span style="left:478px;width:53px">0014</span><span style="left:531px;width:138px">21/05/2015 17:48:26</span><span style="left:669px;width:47px">1</span><span style="left:716px;width:65px">OK</span><span style="left:781px;width:91px">Aditivo</span><span style="left:872px;width:86px">Vigente</span><svg class="ic" style="left:966px" width="16" height="17" viewBox="0 0 16 17"><rect x="0.5" y="0.5" width="13" height="15" fill="#fdfdfd" stroke="#8c8c8c"/><path d="M3.45 9.45 L11.95 0.95 L15.05 4.05 L6.55 12.55 L3.1 13 Z" fill="#f3d29b" stroke="#d8ab68" stroke-width=".7"/><path d="M3.1 13 L3.5 11 L5.1 12.6 Z" fill="#3a3a3a"/></svg><svg class="ic" style="left:985px;opacity:.85" width="18" height="17" viewBox="0 0 18 17"><circle cx="9.2" cy="3.4" r="3" fill="#edc48a" stroke="#c99a58" stroke-width=".6"/><path d="M3.5 12.5 Q3.5 6.8 9.2 6.8 Q14.5 6.8 14.5 12.5 Z" fill="#dfa85a" stroke="#b98644" stroke-width=".6"/><circle cx="4.7" cy="6.6" r="2.6" fill="#f4d3a0" stroke="#b89868" stroke-width=".5"/><path d="M0.3 14.6 Q0.3 9.8 4.7 9.8 Q9.2 9.8 9.2 14.6 Z" fill="#3d8ae6" stroke="#2d6cc0" stroke-width=".6"/><circle cx="13" cy="11.6" r="4.5" fill="#fff" stroke="#666" stroke-width="1"/><path d="M13 9v5.2M10.4 11.6h5.2" stroke="#333" stroke-width="1.5"/></svg><svg class="ic" style="left:1008px" width="18" height="17" viewBox="0 0 18 17"><g fill="#c9c9c9" stroke="#b0b0b0" stroke-width=".6"><path d="M6.4 0.5 l1.2 0 .5 1.6 1.3 .5 1.5-.8 .9 .9 -.8 1.5 .5 1.3 1.6 .5 0 1.2 -1.6 .5 -.5 1.3 .8 1.5 -.9 .9 -1.5-.8 -1.3 .5 -.5 1.6 -1.2 0 -.5-1.6 -1.3-.5 -1.5 .8 -.9-.9 .8-1.5 -.5-1.3 -1.6-.5 0-1.2 1.6-.5 .5-1.3 -.8-1.5 .9-.9 1.5 .8 1.3-.5z"/></g><circle cx="7" cy="7.1" r="2.1" fill="#eee" stroke="#b0b0b0" stroke-width=".6"/><circle cx="11.2" cy="11.6" r="4.6" fill="#fff" stroke="#666" stroke-width="1"/><path d="M11.2 8.9v5.4M8.5 11.6h5.4" stroke="#333" stroke-width="1.6"/></svg><svg class="ic" style="left:1029px" width="17" height="17" viewBox="0 0 17 17"><path d="M2.5 0.5h5.2l2 2v4.5h-7.2z" fill="#dfeaf8" stroke="#9db2cf" stroke-width=".8"/><rect x="0.4" y="6.4" width="10" height="5.8" rx="1" fill="#d9dde2" stroke="#9aa0a8" stroke-width=".8"/><rect x="2" y="9.6" width="5.6" height="4" fill="#fff" stroke="#9aa0a8" stroke-width=".8"/><circle cx="10.8" cy="11.4" r="4.6" fill="#fff" stroke="#666" stroke-width="1"/><path d="M10.8 8.7v5.4M8.1 11.4h5.4" stroke="#333" stroke-width="1.6"/></svg></div>
<div class="tr alt" style="top:339px"><span style="left:0px;width:63px">01A</span><span style="left:63px;width:63px">11</span><span style="left:133px;width:345px;text-align:left">Marcos Vinicius Lopes</span><span style="left:478px;width:53px">0015</span><span style="left:531px;width:138px">25/05/2015 09:30:53</span><span style="left:669px;width:47px">1</span><span style="left:716px;width:65px">OK</span><span style="left:781px;width:91px">Quitação</span><span style="left:872px;width:86px">Vigente</span><svg class="ic" style="left:966px" width="16" height="17" viewBox="0 0 16 17"><rect x="0.5" y="0.5" width="13" height="15" fill="#fdfdfd" stroke="#8c8c8c"/><path d="M3.45 9.45 L11.95 0.95 L15.05 4.05 L6.55 12.55 L3.1 13 Z" fill="#f3d29b" stroke="#d8ab68" stroke-width=".7"/><path d="M3.1 13 L3.5 11 L5.1 12.6 Z" fill="#3a3a3a"/></svg><svg class="ic" style="left:985px;opacity:.85" width="18" height="17" viewBox="0 0 18 17"><circle cx="9.2" cy="3.4" r="3" fill="#edc48a" stroke="#c99a58" stroke-width=".6"/><path d="M3.5 12.5 Q3.5 6.8 9.2 6.8 Q14.5 6.8 14.5 12.5 Z" fill="#dfa85a" stroke="#b98644" stroke-width=".6"/><circle cx="4.7" cy="6.6" r="2.6" fill="#f4d3a0" stroke="#b89868" stroke-width=".5"/><path d="M0.3 14.6 Q0.3 9.8 4.7 9.8 Q9.2 9.8 9.2 14.6 Z" fill="#3d8ae6" stroke="#2d6cc0" stroke-width=".6"/><circle cx="13" cy="11.6" r="4.5" fill="#fff" stroke="#666" stroke-width="1"/><path d="M13 9v5.2M10.4 11.6h5.2" stroke="#333" stroke-width="1.5"/></svg><svg class="ic" style="left:1008px" width="18" height="17" viewBox="0 0 18 17"><g fill="#c9c9c9" stroke="#b0b0b0" stroke-width=".6"><path d="M6.4 0.5 l1.2 0 .5 1.6 1.3 .5 1.5-.8 .9 .9 -.8 1.5 .5 1.3 1.6 .5 0 1.2 -1.6 .5 -.5 1.3 .8 1.5 -.9 .9 -1.5-.8 -1.3 .5 -.5 1.6 -1.2 0 -.5-1.6 -1.3-.5 -1.5 .8 -.9-.9 .8-1.5 -.5-1.3 -1.6-.5 0-1.2 1.6-.5 .5-1.3 -.8-1.5 .9-.9 1.5 .8 1.3-.5z"/></g><circle cx="7" cy="7.1" r="2.1" fill="#eee" stroke="#b0b0b0" stroke-width=".6"/><circle cx="11.2" cy="11.6" r="4.6" fill="#fff" stroke="#666" stroke-width="1"/><path d="M11.2 8.9v5.4M8.5 11.6h5.4" stroke="#333" stroke-width="1.6"/></svg><svg class="ic" style="left:1029px" width="17" height="17" viewBox="0 0 17 17"><path d="M2.5 0.5h5.2l2 2v4.5h-7.2z" fill="#dfeaf8" stroke="#9db2cf" stroke-width=".8"/><rect x="0.4" y="6.4" width="10" height="5.8" rx="1" fill="#d9dde2" stroke="#9aa0a8" stroke-width=".8"/><rect x="2" y="9.6" width="5.6" height="4" fill="#fff" stroke="#9aa0a8" stroke-width=".8"/><circle cx="10.8" cy="11.4" r="4.6" fill="#fff" stroke="#666" stroke-width="1"/><path d="M10.8 8.7v5.4M8.1 11.4h5.4" stroke="#333" stroke-width="1.6"/></svg><i class="vs" style="left:63px"></i><i class="vs" style="left:126px"></i><i class="vs" style="left:478px"></i><i class="vs" style="left:531px"></i><i class="vs" style="left:669px"></i><i class="vs" style="left:716px"></i><i class="vs" style="left:781px"></i><i class="vs" style="left:872px"></i><i class="vs" style="left:956px"></i></div>
<div class="tr" style="top:368px"><span style="left:0px;width:63px">01A</span><span style="left:63px;width:63px">11</span><span style="left:133px;width:345px;text-align:left">Natália Ferreira</span><span style="left:478px;width:53px">0016</span><span style="left:531px;width:138px">26/05/2015 12:22:14</span><span style="left:669px;width:47px">1</span><span style="left:716px;width:65px">Pendente</span><span style="left:781px;width:91px">Venda</span><span style="left:872px;width:86px">Vigente</span><svg class="ic" style="left:966px" width="16" height="17" viewBox="0 0 16 17"><rect x="0.5" y="0.5" width="13" height="15" fill="#fdfdfd" stroke="#8c8c8c"/><path d="M3.45 9.45 L11.95 0.95 L15.05 4.05 L6.55 12.55 L3.1 13 Z" fill="#f3d29b" stroke="#d8ab68" stroke-width=".7"/><path d="M3.1 13 L3.5 11 L5.1 12.6 Z" fill="#3a3a3a"/></svg><svg class="ic" style="left:985px;opacity:.85" width="18" height="17" viewBox="0 0 18 17"><circle cx="9.2" cy="3.4" r="3" fill="#edc48a" stroke="#c99a58" stroke-width=".6"/><path d="M3.5 12.5 Q3.5 6.8 9.2 6.8 Q14.5 6.8 14.5 12.5 Z" fill="#dfa85a" stroke="#b98644" stroke-width=".6"/><circle cx="4.7" cy="6.6" r="2.6" fill="#f4d3a0" stroke="#b89868" stroke-width=".5"/><path d="M0.3 14.6 Q0.3 9.8 4.7 9.8 Q9.2 9.8 9.2 14.6 Z" fill="#3d8ae6" stroke="#2d6cc0" stroke-width=".6"/><circle cx="13" cy="11.6" r="4.5" fill="#fff" stroke="#666" stroke-width="1"/><path d="M13 9v5.2M10.4 11.6h5.2" stroke="#333" stroke-width="1.5"/></svg><svg class="ic" style="left:1008px" width="18" height="17" viewBox="0 0 18 17"><g fill="#c9c9c9" stroke="#b0b0b0" stroke-width=".6"><path d="M6.4 0.5 l1.2 0 .5 1.6 1.3 .5 1.5-.8 .9 .9 -.8 1.5 .5 1.3 1.6 .5 0 1.2 -1.6 .5 -.5 1.3 .8 1.5 -.9 .9 -1.5-.8 -1.3 .5 -.5 1.6 -1.2 0 -.5-1.6 -1.3-.5 -1.5 .8 -.9-.9 .8-1.5 -.5-1.3 -1.6-.5 0-1.2 1.6-.5 .5-1.3 -.8-1.5 .9-.9 1.5 .8 1.3-.5z"/></g><circle cx="7" cy="7.1" r="2.1" fill="#eee" stroke="#b0b0b0" stroke-width=".6"/><circle cx="11.2" cy="11.6" r="4.6" fill="#fff" stroke="#666" stroke-width="1"/><path d="M11.2 8.9v5.4M8.5 11.6h5.4" stroke="#333" stroke-width="1.6"/></svg><svg class="ic" style="left:1029px" width="17" height="17" viewBox="0 0 17 17"><path d="M2.5 0.5h5.2l2 2v4.5h-7.2z" fill="#dfeaf8" stroke="#9db2cf" stroke-width=".8"/><rect x="0.4" y="6.4" width="10" height="5.8" rx="1" fill="#d9dde2" stroke="#9aa0a8" stroke-width=".8"/><rect x="2" y="9.6" width="5.6" height="4" fill="#fff" stroke="#9aa0a8" stroke-width=".8"/><circle cx="10.8" cy="11.4" r="4.6" fill="#fff" stroke="#666" stroke-width="1"/><path d="M10.8 8.7v5.4M8.1 11.4h5.4" stroke="#333" stroke-width="1.6"/></svg></div>
<div class="tr alt" style="top:397px"><span style="left:0px;width:63px">01A</span><span style="left:63px;width:63px">12</span><span style="left:133px;width:345px;text-align:left">Maria dos Santos Reis</span><span style="left:478px;width:53px">0018</span><span style="left:531px;width:138px">20/06/2019 17:24:34</span><span style="left:669px;width:47px">1</span><span style="left:716px;width:65px">Pendente</span><span style="left:781px;width:91px">Venda</span><span style="left:872px;width:86px">Vigente</span><svg class="ic" style="left:966px" width="16" height="17" viewBox="0 0 16 17"><rect x="0.5" y="0.5" width="13" height="15" fill="#fdfdfd" stroke="#8c8c8c"/><path d="M3.45 9.45 L11.95 0.95 L15.05 4.05 L6.55 12.55 L3.1 13 Z" fill="#f3d29b" stroke="#d8ab68" stroke-width=".7"/><path d="M3.1 13 L3.5 11 L5.1 12.6 Z" fill="#3a3a3a"/></svg><svg class="ic" style="left:985px;opacity:.85" width="18" height="17" viewBox="0 0 18 17"><circle cx="9.2" cy="3.4" r="3" fill="#edc48a" stroke="#c99a58" stroke-width=".6"/><path d="M3.5 12.5 Q3.5 6.8 9.2 6.8 Q14.5 6.8 14.5 12.5 Z" fill="#dfa85a" stroke="#b98644" stroke-width=".6"/><circle cx="4.7" cy="6.6" r="2.6" fill="#f4d3a0" stroke="#b89868" stroke-width=".5"/><path d="M0.3 14.6 Q0.3 9.8 4.7 9.8 Q9.2 9.8 9.2 14.6 Z" fill="#3d8ae6" stroke="#2d6cc0" stroke-width=".6"/><circle cx="13" cy="11.6" r="4.5" fill="#fff" stroke="#666" stroke-width="1"/><path d="M13 9v5.2M10.4 11.6h5.2" stroke="#333" stroke-width="1.5"/></svg><svg class="ic" style="left:1008px" width="18" height="17" viewBox="0 0 18 17"><g fill="#c9c9c9" stroke="#b0b0b0" stroke-width=".6"><path d="M6.4 0.5 l1.2 0 .5 1.6 1.3 .5 1.5-.8 .9 .9 -.8 1.5 .5 1.3 1.6 .5 0 1.2 -1.6 .5 -.5 1.3 .8 1.5 -.9 .9 -1.5-.8 -1.3 .5 -.5 1.6 -1.2 0 -.5-1.6 -1.3-.5 -1.5 .8 -.9-.9 .8-1.5 -.5-1.3 -1.6-.5 0-1.2 1.6-.5 .5-1.3 -.8-1.5 .9-.9 1.5 .8 1.3-.5z"/></g><circle cx="7" cy="7.1" r="2.1" fill="#eee" stroke="#b0b0b0" stroke-width=".6"/><circle cx="11.2" cy="11.6" r="4.6" fill="#fff" stroke="#666" stroke-width="1"/><path d="M11.2 8.9v5.4M8.5 11.6h5.4" stroke="#333" stroke-width="1.6"/></svg><svg class="ic" style="left:1029px" width="17" height="17" viewBox="0 0 17 17"><path d="M2.5 0.5h5.2l2 2v4.5h-7.2z" fill="#dfeaf8" stroke="#9db2cf" stroke-width=".8"/><rect x="0.4" y="6.4" width="10" height="5.8" rx="1" fill="#d9dde2" stroke="#9aa0a8" stroke-width=".8"/><rect x="2" y="9.6" width="5.6" height="4" fill="#fff" stroke="#9aa0a8" stroke-width=".8"/><circle cx="10.8" cy="11.4" r="4.6" fill="#fff" stroke="#666" stroke-width="1"/><path d="M10.8 8.7v5.4M8.1 11.4h5.4" stroke="#333" stroke-width="1.6"/></svg><i class="vs" style="left:63px"></i><i class="vs" style="left:126px"></i><i class="vs" style="left:478px"></i><i class="vs" style="left:531px"></i><i class="vs" style="left:669px"></i><i class="vs" style="left:716px"></i><i class="vs" style="left:781px"></i><i class="vs" style="left:872px"></i><i class="vs" style="left:956px"></i></div>
<div class="tr" style="top:426px"><span style="left:0px;width:63px">01A</span><span style="left:63px;width:63px">13</span><span style="left:133px;width:345px;text-align:left">Walcir Franzoni</span><span style="left:478px;width:53px">0019</span><span style="left:531px;width:138px">14/01/2020 15:17:26</span><span style="left:669px;width:47px">1</span><span style="left:716px;width:65px">OK</span><span style="left:781px;width:91px">Cessão</span><span style="left:872px;width:86px">Vigente</span><svg class="ic" style="left:966px" width="16" height="17" viewBox="0 0 16 17"><rect x="0.5" y="0.5" width="13" height="15" fill="#fdfdfd" stroke="#8c8c8c"/><path d="M3.45 9.45 L11.95 0.95 L15.05 4.05 L6.55 12.55 L3.1 13 Z" fill="#f3d29b" stroke="#d8ab68" stroke-width=".7"/><path d="M3.1 13 L3.5 11 L5.1 12.6 Z" fill="#3a3a3a"/></svg><svg class="ic" style="left:985px;opacity:.85" width="18" height="17" viewBox="0 0 18 17"><circle cx="9.2" cy="3.4" r="3" fill="#edc48a" stroke="#c99a58" stroke-width=".6"/><path d="M3.5 12.5 Q3.5 6.8 9.2 6.8 Q14.5 6.8 14.5 12.5 Z" fill="#dfa85a" stroke="#b98644" stroke-width=".6"/><circle cx="4.7" cy="6.6" r="2.6" fill="#f4d3a0" stroke="#b89868" stroke-width=".5"/><path d="M0.3 14.6 Q0.3 9.8 4.7 9.8 Q9.2 9.8 9.2 14.6 Z" fill="#3d8ae6" stroke="#2d6cc0" stroke-width=".6"/><circle cx="13" cy="11.6" r="4.5" fill="#fff" stroke="#666" stroke-width="1"/><path d="M13 9v5.2M10.4 11.6h5.2" stroke="#333" stroke-width="1.5"/></svg><svg class="ic" style="left:1008px" width="18" height="17" viewBox="0 0 18 17"><g fill="#c9c9c9" stroke="#b0b0b0" stroke-width=".6"><path d="M6.4 0.5 l1.2 0 .5 1.6 1.3 .5 1.5-.8 .9 .9 -.8 1.5 .5 1.3 1.6 .5 0 1.2 -1.6 .5 -.5 1.3 .8 1.5 -.9 .9 -1.5-.8 -1.3 .5 -.5 1.6 -1.2 0 -.5-1.6 -1.3-.5 -1.5 .8 -.9-.9 .8-1.5 -.5-1.3 -1.6-.5 0-1.2 1.6-.5 .5-1.3 -.8-1.5 .9-.9 1.5 .8 1.3-.5z"/></g><circle cx="7" cy="7.1" r="2.1" fill="#eee" stroke="#b0b0b0" stroke-width=".6"/><circle cx="11.2" cy="11.6" r="4.6" fill="#fff" stroke="#666" stroke-width="1"/><path d="M11.2 8.9v5.4M8.5 11.6h5.4" stroke="#333" stroke-width="1.6"/></svg><svg class="ic" style="left:1029px" width="17" height="17" viewBox="0 0 17 17"><path d="M2.5 0.5h5.2l2 2v4.5h-7.2z" fill="#dfeaf8" stroke="#9db2cf" stroke-width=".8"/><rect x="0.4" y="6.4" width="10" height="5.8" rx="1" fill="#d9dde2" stroke="#9aa0a8" stroke-width=".8"/><rect x="2" y="9.6" width="5.6" height="4" fill="#fff" stroke="#9aa0a8" stroke-width=".8"/><circle cx="10.8" cy="11.4" r="4.6" fill="#fff" stroke="#666" stroke-width="1"/><path d="M10.8 8.7v5.4M8.1 11.4h5.4" stroke="#333" stroke-width="1.6"/></svg></div>
<div class="tr alt" style="top:455px"><span style="left:0px;width:63px">01A</span><span style="left:63px;width:63px">14</span><span style="left:133px;width:345px;text-align:left">Rafael Tributo dos Reis</span><span style="left:478px;width:53px">0021</span><span style="left:531px;width:138px">28/05/2015 19:47:40</span><span style="left:669px;width:47px">1</span><span style="left:716px;width:65px">Pendente</span><span style="left:781px;width:91px">Venda</span><span style="left:872px;width:86px">Vigente</span><svg class="ic" style="left:966px" width="16" height="17" viewBox="0 0 16 17"><rect x="0.5" y="0.5" width="13" height="15" fill="#fdfdfd" stroke="#8c8c8c"/><path d="M3.45 9.45 L11.95 0.95 L15.05 4.05 L6.55 12.55 L3.1 13 Z" fill="#f3d29b" stroke="#d8ab68" stroke-width=".7"/><path d="M3.1 13 L3.5 11 L5.1 12.6 Z" fill="#3a3a3a"/></svg><svg class="ic" style="left:985px;opacity:.85" width="18" height="17" viewBox="0 0 18 17"><circle cx="9.2" cy="3.4" r="3" fill="#edc48a" stroke="#c99a58" stroke-width=".6"/><path d="M3.5 12.5 Q3.5 6.8 9.2 6.8 Q14.5 6.8 14.5 12.5 Z" fill="#dfa85a" stroke="#b98644" stroke-width=".6"/><circle cx="4.7" cy="6.6" r="2.6" fill="#f4d3a0" stroke="#b89868" stroke-width=".5"/><path d="M0.3 14.6 Q0.3 9.8 4.7 9.8 Q9.2 9.8 9.2 14.6 Z" fill="#3d8ae6" stroke="#2d6cc0" stroke-width=".6"/><circle cx="13" cy="11.6" r="4.5" fill="#fff" stroke="#666" stroke-width="1"/><path d="M13 9v5.2M10.4 11.6h5.2" stroke="#333" stroke-width="1.5"/></svg><svg class="ic" style="left:1008px" width="18" height="17" viewBox="0 0 18 17"><g fill="#c9c9c9" stroke="#b0b0b0" stroke-width=".6"><path d="M6.4 0.5 l1.2 0 .5 1.6 1.3 .5 1.5-.8 .9 .9 -.8 1.5 .5 1.3 1.6 .5 0 1.2 -1.6 .5 -.5 1.3 .8 1.5 -.9 .9 -1.5-.8 -1.3 .5 -.5 1.6 -1.2 0 -.5-1.6 -1.3-.5 -1.5 .8 -.9-.9 .8-1.5 -.5-1.3 -1.6-.5 0-1.2 1.6-.5 .5-1.3 -.8-1.5 .9-.9 1.5 .8 1.3-.5z"/></g><circle cx="7" cy="7.1" r="2.1" fill="#eee" stroke="#b0b0b0" stroke-width=".6"/><circle cx="11.2" cy="11.6" r="4.6" fill="#fff" stroke="#666" stroke-width="1"/><path d="M11.2 8.9v5.4M8.5 11.6h5.4" stroke="#333" stroke-width="1.6"/></svg><svg class="ic" style="left:1029px" width="17" height="17" viewBox="0 0 17 17"><path d="M2.5 0.5h5.2l2 2v4.5h-7.2z" fill="#dfeaf8" stroke="#9db2cf" stroke-width=".8"/><rect x="0.4" y="6.4" width="10" height="5.8" rx="1" fill="#d9dde2" stroke="#9aa0a8" stroke-width=".8"/><rect x="2" y="9.6" width="5.6" height="4" fill="#fff" stroke="#9aa0a8" stroke-width=".8"/><circle cx="10.8" cy="11.4" r="4.6" fill="#fff" stroke="#666" stroke-width="1"/><path d="M10.8 8.7v5.4M8.1 11.4h5.4" stroke="#333" stroke-width="1.6"/></svg><i class="vs" style="left:63px"></i><i class="vs" style="left:126px"></i><i class="vs" style="left:478px"></i><i class="vs" style="left:531px"></i><i class="vs" style="left:669px"></i><i class="vs" style="left:716px"></i><i class="vs" style="left:781px"></i><i class="vs" style="left:872px"></i><i class="vs" style="left:956px"></i></div>
<div class="tr" style="top:484px"><span style="left:0px;width:63px">01A</span><span style="left:63px;width:63px">15</span><span style="left:133px;width:345px;text-align:left">Sandra Oliveira</span><span style="left:478px;width:53px">0022</span><span style="left:531px;width:138px">29/05/2015 10:00:40</span><span style="left:669px;width:47px">1</span><span style="left:716px;width:65px">OK</span><span style="left:781px;width:91px">Venda</span><span style="left:872px;width:86px">Vigente</span><svg class="ic" style="left:966px" width="16" height="17" viewBox="0 0 16 17"><rect x="0.5" y="0.5" width="13" height="15" fill="#fdfdfd" stroke="#8c8c8c"/><path d="M3.45 9.45 L11.95 0.95 L15.05 4.05 L6.55 12.55 L3.1 13 Z" fill="#f3d29b" stroke="#d8ab68" stroke-width=".7"/><path d="M3.1 13 L3.5 11 L5.1 12.6 Z" fill="#3a3a3a"/></svg><svg class="ic" style="left:985px;opacity:.85" width="18" height="17" viewBox="0 0 18 17"><circle cx="9.2" cy="3.4" r="3" fill="#edc48a" stroke="#c99a58" stroke-width=".6"/><path d="M3.5 12.5 Q3.5 6.8 9.2 6.8 Q14.5 6.8 14.5 12.5 Z" fill="#dfa85a" stroke="#b98644" stroke-width=".6"/><circle cx="4.7" cy="6.6" r="2.6" fill="#f4d3a0" stroke="#b89868" stroke-width=".5"/><path d="M0.3 14.6 Q0.3 9.8 4.7 9.8 Q9.2 9.8 9.2 14.6 Z" fill="#3d8ae6" stroke="#2d6cc0" stroke-width=".6"/><circle cx="13" cy="11.6" r="4.5" fill="#fff" stroke="#666" stroke-width="1"/><path d="M13 9v5.2M10.4 11.6h5.2" stroke="#333" stroke-width="1.5"/></svg><svg class="ic" style="left:1008px" width="18" height="17" viewBox="0 0 18 17"><g fill="#c9c9c9" stroke="#b0b0b0" stroke-width=".6"><path d="M6.4 0.5 l1.2 0 .5 1.6 1.3 .5 1.5-.8 .9 .9 -.8 1.5 .5 1.3 1.6 .5 0 1.2 -1.6 .5 -.5 1.3 .8 1.5 -.9 .9 -1.5-.8 -1.3 .5 -.5 1.6 -1.2 0 -.5-1.6 -1.3-.5 -1.5 .8 -.9-.9 .8-1.5 -.5-1.3 -1.6-.5 0-1.2 1.6-.5 .5-1.3 -.8-1.5 .9-.9 1.5 .8 1.3-.5z"/></g><circle cx="7" cy="7.1" r="2.1" fill="#eee" stroke="#b0b0b0" stroke-width=".6"/><circle cx="11.2" cy="11.6" r="4.6" fill="#fff" stroke="#666" stroke-width="1"/><path d="M11.2 8.9v5.4M8.5 11.6h5.4" stroke="#333" stroke-width="1.6"/></svg><svg class="ic" style="left:1029px" width="17" height="17" viewBox="0 0 17 17"><path d="M2.5 0.5h5.2l2 2v4.5h-7.2z" fill="#dfeaf8" stroke="#9db2cf" stroke-width=".8"/><rect x="0.4" y="6.4" width="10" height="5.8" rx="1" fill="#d9dde2" stroke="#9aa0a8" stroke-width=".8"/><rect x="2" y="9.6" width="5.6" height="4" fill="#fff" stroke="#9aa0a8" stroke-width=".8"/><circle cx="10.8" cy="11.4" r="4.6" fill="#fff" stroke="#666" stroke-width="1"/><path d="M10.8 8.7v5.4M8.1 11.4h5.4" stroke="#333" stroke-width="1.6"/></svg></div>
  </div>

<div id="dd">
  <div class="ddi" style="top:4px"><svg class="ddic" viewBox="0 0 16 16"><g fill="#8fa3c4"><rect x="1" y="2" width="2" height="2"/><rect x="1" y="7" width="2" height="2"/><rect x="1" y="12" width="2" height="2"/></g><path d="M5 3h10M5 8h10M5 13h10" stroke="#4a4a4a" stroke-width="1.1"/></svg>Checklist</div>
  <div class="ddi" style="top:30px"><svg class="ddic" viewBox="0 0 16 16"><path d="M13.5 6 A6 6 0 1 0 12 12.5" fill="none" stroke="#e8702a" stroke-width="3"/><path d="M8 5.5 L14.5 7 L10 12 Z" fill="#e8702a"/></svg>Liberar Contrato</div>
  <div class="ddi" style="top:56px"><svg class="ddic" viewBox="0 0 16 16"><circle cx="10" cy="4" r="3" fill="#e9b36a" stroke="#b07a30" stroke-width=".7"/><path d="M5 12 Q5 7 10 7 Q15 7 15 12 Z" fill="#d89a45" stroke="#a8742c" stroke-width=".7"/><circle cx="5.5" cy="7" r="2.6" fill="#f3c98c" stroke="#9a7a50" stroke-width=".6"/><path d="M1 15 Q1 10 5.5 10 Q10 10 10 15 Z" fill="#3f86d9" stroke="#2b62a8" stroke-width=".7"/></svg>S&oacute;cios</div>
  <div class="ddi" style="top:82px"><svg class="ddic" viewBox="0 0 16 16"><path d="M1 8 L8 2 L15 8" fill="none" stroke="#c97a3a" stroke-width="2"/><path d="M3 8v6h10V8L8 4z" fill="#f3ead8" stroke="#9a8a6a" stroke-width=".7"/><rect x="5" y="10" width="2.2" height="4" fill="#5a8a5a"/><rect x="9" y="10" width="2.2" height="2.2" fill="#6aa0d8"/><path d="M0 14.5h16" stroke="#6aa06a" stroke-width="1.4"/></svg>Conta Unidade</div>
  <div id="ddcaret"></div>
</div>

</div>
<div id="overlay"></div>
<div id="ptitle2">Gerenciador de Vendas</div>
<div class="btn2" style="left:963px;top:100px;background:#7774a7">BUSCAR</div>
<div class="btn2" style="left:963px;top:147px;background:#47957f;outline:1px dotted rgba(0,0,0,.09);outline-offset:-6px">LIMPAR</div>
<div id="modal">
  <div class="m" id="mtitle">Checklist</div>
  <div class="m" id="memp">Jardim Eldorado</div>
  <div class="m" id="mlote">Quadra 01A - Lote 02</div>
  <div id="tabs">
    <div id="tabhead">
      <div class="tab" style="left:3px;width:74px">Proposta</div>
      <div class="tab act" style="left:81px;width:59px">Venda</div>
      <div class="tab" style="left:144px;width:73px">Quita&ccedil;&atilde;o</div>
    </div>
    <div class="fs" style="left:19px;top:49px;width:623px;height:167px">
      <div class="cb" style="left:13px;top:12px"><svg viewBox="0 0 13 13"><path d="M3.2 7.0 L5.5 9.3 L10.5 3.0" fill="none" stroke="#fff" stroke-width="1.9"/></svg></div>
      <div class="cl" style="left:39px;top:10px">Consulta Serasa *</div>
      <div class="cb" style="left:13px;top:44px"><svg viewBox="0 0 13 13"><path d="M3.2 7.0 L5.5 9.3 L10.5 3.0" fill="none" stroke="#fff" stroke-width="1.9"/></svg></div>
      <div class="cl" style="left:39px;top:42px">Entrada Quitada *</div>
      <div class="cb" style="left:13px;top:76px"><svg viewBox="0 0 13 13"><path d="M3.2 7.0 L5.5 9.3 L10.5 3.0" fill="none" stroke="#fff" stroke-width="1.9"/></svg></div>
      <div class="cl" style="left:39px;top:74px">Proposta Impressa *</div>
      <div class="cb" style="left:308px;top:12px"><svg viewBox="0 0 13 13"><path d="M3.2 7.0 L5.5 9.3 L10.5 3.0" fill="none" stroke="#fff" stroke-width="1.9"/></svg></div>
      <div class="cl" style="left:334px;top:10px">Emiss&atilde;o Contrato *</div>
      <div class="cb" style="left:308px;top:44px"><svg viewBox="0 0 13 13"><path d="M3.2 7.0 L5.5 9.3 L10.5 3.0" fill="none" stroke="#fff" stroke-width="1.9"/></svg></div>
      <div class="cl" style="left:334px;top:42px">Proposta assinada *</div>
    </div>
    <div class="fs" style="left:19px;top:231px;width:623px;height:237px">
      <div id="obs-h">Observa&ccedil;&otilde;es</div>
      <div class="ol" style="top:43px"><b>Usu&aacute;rio:</b> Administrador</div>
      <div class="ol" style="top:59px"><b>Data:</b> 22/03/2022 10:16</div>
      <div id="ta">N&atilde;o foi alterado nenhuma cl&aacute;usula do contrato padr&atilde;o.<svg style="position:absolute;right:1px;bottom:1px;width:10px;height:10px" viewBox="0 0 10 10"><path d="M9.5 1.5 L1.5 9.5 M9.5 5.5 L5.5 9.5" stroke="#555" stroke-width="1"/></svg></div>
      <div id="hr"></div>
      <div id="pg1">1</div>
      <svg style="position:absolute;left:270px;top:180px;width:90px;height:45px" viewBox="0 0 90 45"><path d="M16.2 4.9 L6 22.4 L16.2 39.8 L21.7 35.7 L13.6 22.4 L21.7 8.6 Z" fill="#e9e9e9"/><path d="M74.1 4.9 L83.8 22.4 L74.1 39.8 L68.1 35.7 L76.2 22.4 L68.1 8.6 Z" fill="#e9e9e9"/><path d="M47.4 16.1 L47.4 28.8 L45.2 28.8 L45.2 19.3 Q43.8 20.7 41.9 21.5 L41.9 19.5 Q44.6 18.2 45.8 16.1 Z" fill="#645f80"/></svg>
    </div>
  </div>
  <div class="m" id="ult-l">&Uacute;ltima atualiza&ccedil;&atilde;o</div>
  <div class="m" id="ult-i">10/09/2019 14:59</div>
  <div class="cb" style="left:207px;top:601px"><svg viewBox="0 0 13 13"><path d="M3.2 7.0 L5.5 9.3 L10.5 3.0" fill="none" stroke="#fff" stroke-width="1.9"/></svg></div>
  <div class="m" id="inf-l">Informar atualiza&ccedil;&atilde;o por E-mail</div>
  <div class="m" id="salvar">SALVAR</div>
</div>

<svg id="close" viewBox="0 0 23 23"><circle cx="12" cy="12.6" r="11" fill="#000" opacity=".25"/><circle cx="11.5" cy="11.5" r="10.2" fill="#000" stroke="#fff" stroke-width="2.2"/><path d="M8.2 8.2 L14.8 14.8 M14.8 8.2 L8.2 14.8" stroke="#fff" stroke-width="2.9" stroke-linecap="round"/></svg>
</body>
</html>
